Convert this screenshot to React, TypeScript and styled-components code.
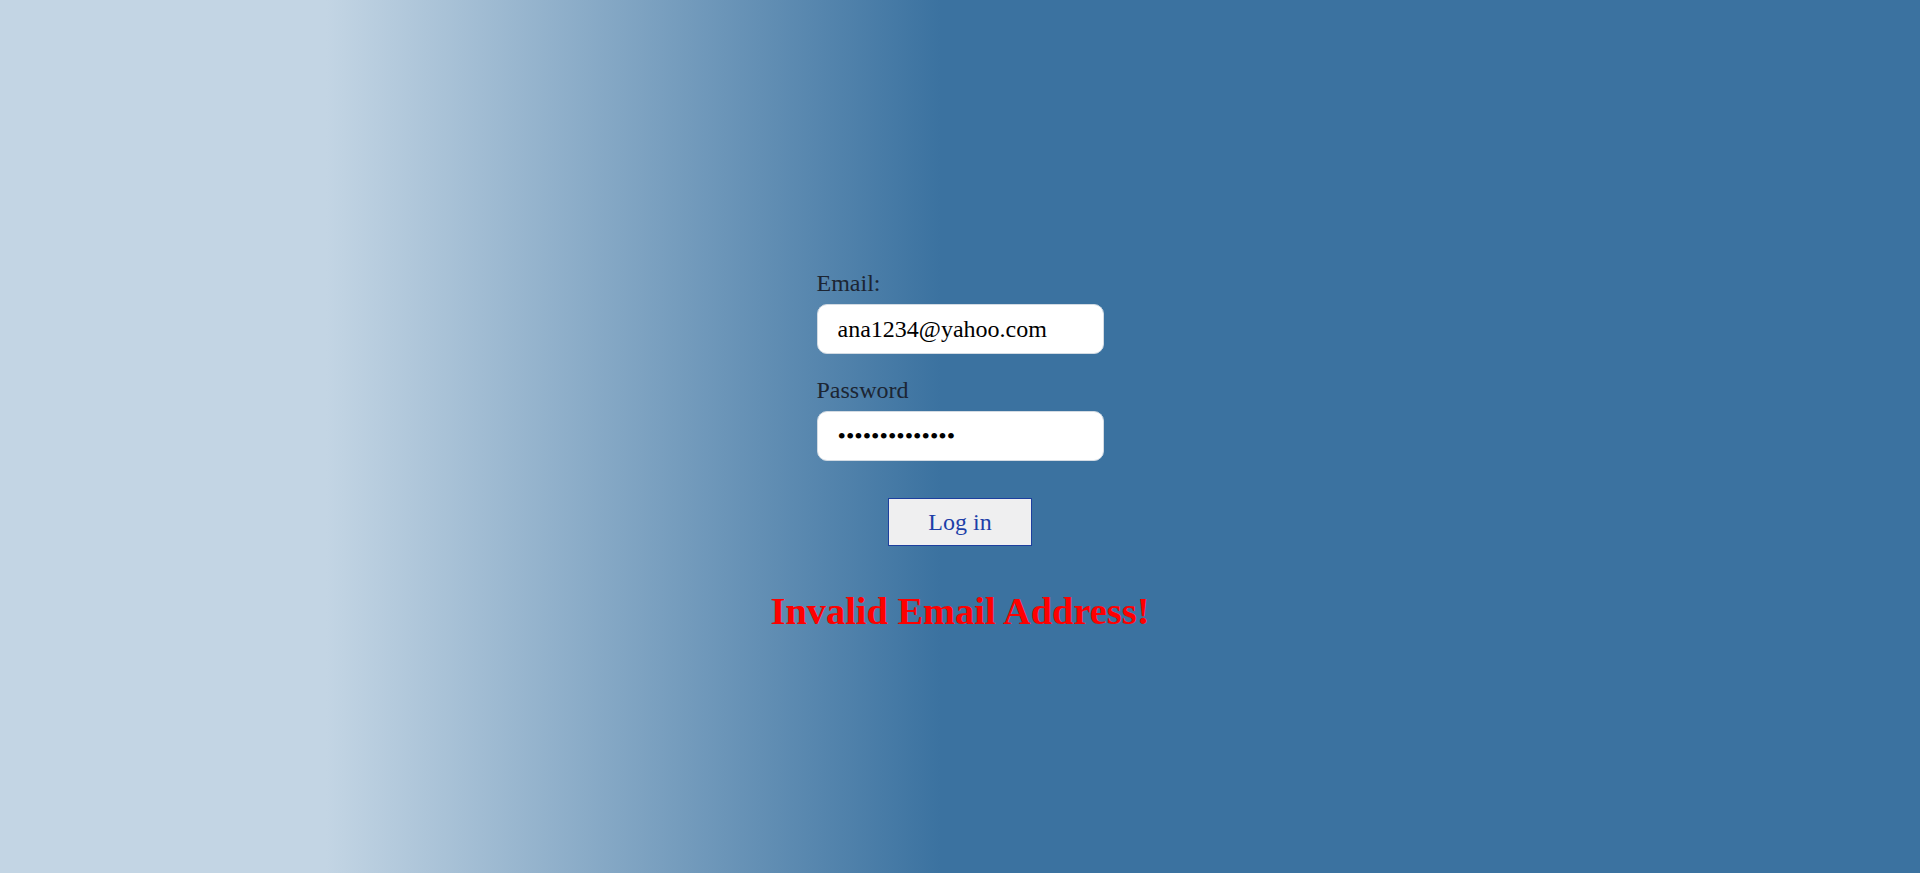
import React from "react";
import styled, { createGlobalStyle } from "styled-components";

const Global = createGlobalStyle`
  html, body { margin: 0; padding: 0; }
  body {
    min-height: 873px;
    font-family: "Liberation Serif", "Times New Roman", serif;
    background: linear-gradient(to right, #c3d5e4 0%, #c3d5e4 17%, #3b72a0 49%, #3b72a0 100%);
  }
`;

const Page = styled.main`
  min-height: 873px;
  display: flex;
  flex-direction: column;
  align-items: center;
  padding-top: 270px;
  box-sizing: border-box;
`;

const Form = styled.form`
  width: 287px;
  display: flex;
  flex-direction: column;
`;

const Label = styled.label<{ $gap: number }>`
  font-size: 24px;
  color: #1c2533;
  line-height: 27px;
  margin-bottom: ${(p) => p.$gap}px;
`;

const Input = styled.input<{ $gap?: number }>`
  width: 287px;
  height: 50px;
  box-sizing: border-box;
  border: 1px solid #d3dbe3;
  border-radius: 10px;
  background: #fff;
  padding: 0 20px;
  font-family: "Liberation Serif", "Times New Roman", serif;
  font-size: 24px;
  color: #000;
  margin: 0 0 ${(p) => p.$gap ?? 0}px;
  outline: none;
`;

const Button = styled.button`
  align-self: center;
  width: 144px;
  height: 48px;
  margin-top: 37px;
  padding: 0;
  background: #efeff0;
  border: 1.2px solid #1d3f9e;
  font-family: "Liberation Serif", "Times New Roman", serif;
  font-size: 24px;
  color: #1d3fa8;
  cursor: pointer;
`;

const Error = styled.h1`
  margin: 43px 0 0;
  font-size: 38.4px;
  line-height: 44px;
  font-weight: bold;
  color: #ff0000;
  font-family: "Liberation Serif", "Times New Roman", serif;
`;

export default function App() {
  return (
    <>
      <Global />
      <Page>
        <Form onSubmit={(e) => e.preventDefault()}>
          <Label htmlFor="email" $gap={7}>Email:</Label>
          <Input id="email" type="email" defaultValue="ana1234@yahoo.com" $gap={23} />
          <Label htmlFor="pw" $gap={7}>Password</Label>
          <Input id="pw" type="password" defaultValue="anapassword123" />
          <Button type="submit">Log in</Button>
        </Form>
        <Error>Invalid Email Address!</Error>
      </Page>
    </>
  );
}
